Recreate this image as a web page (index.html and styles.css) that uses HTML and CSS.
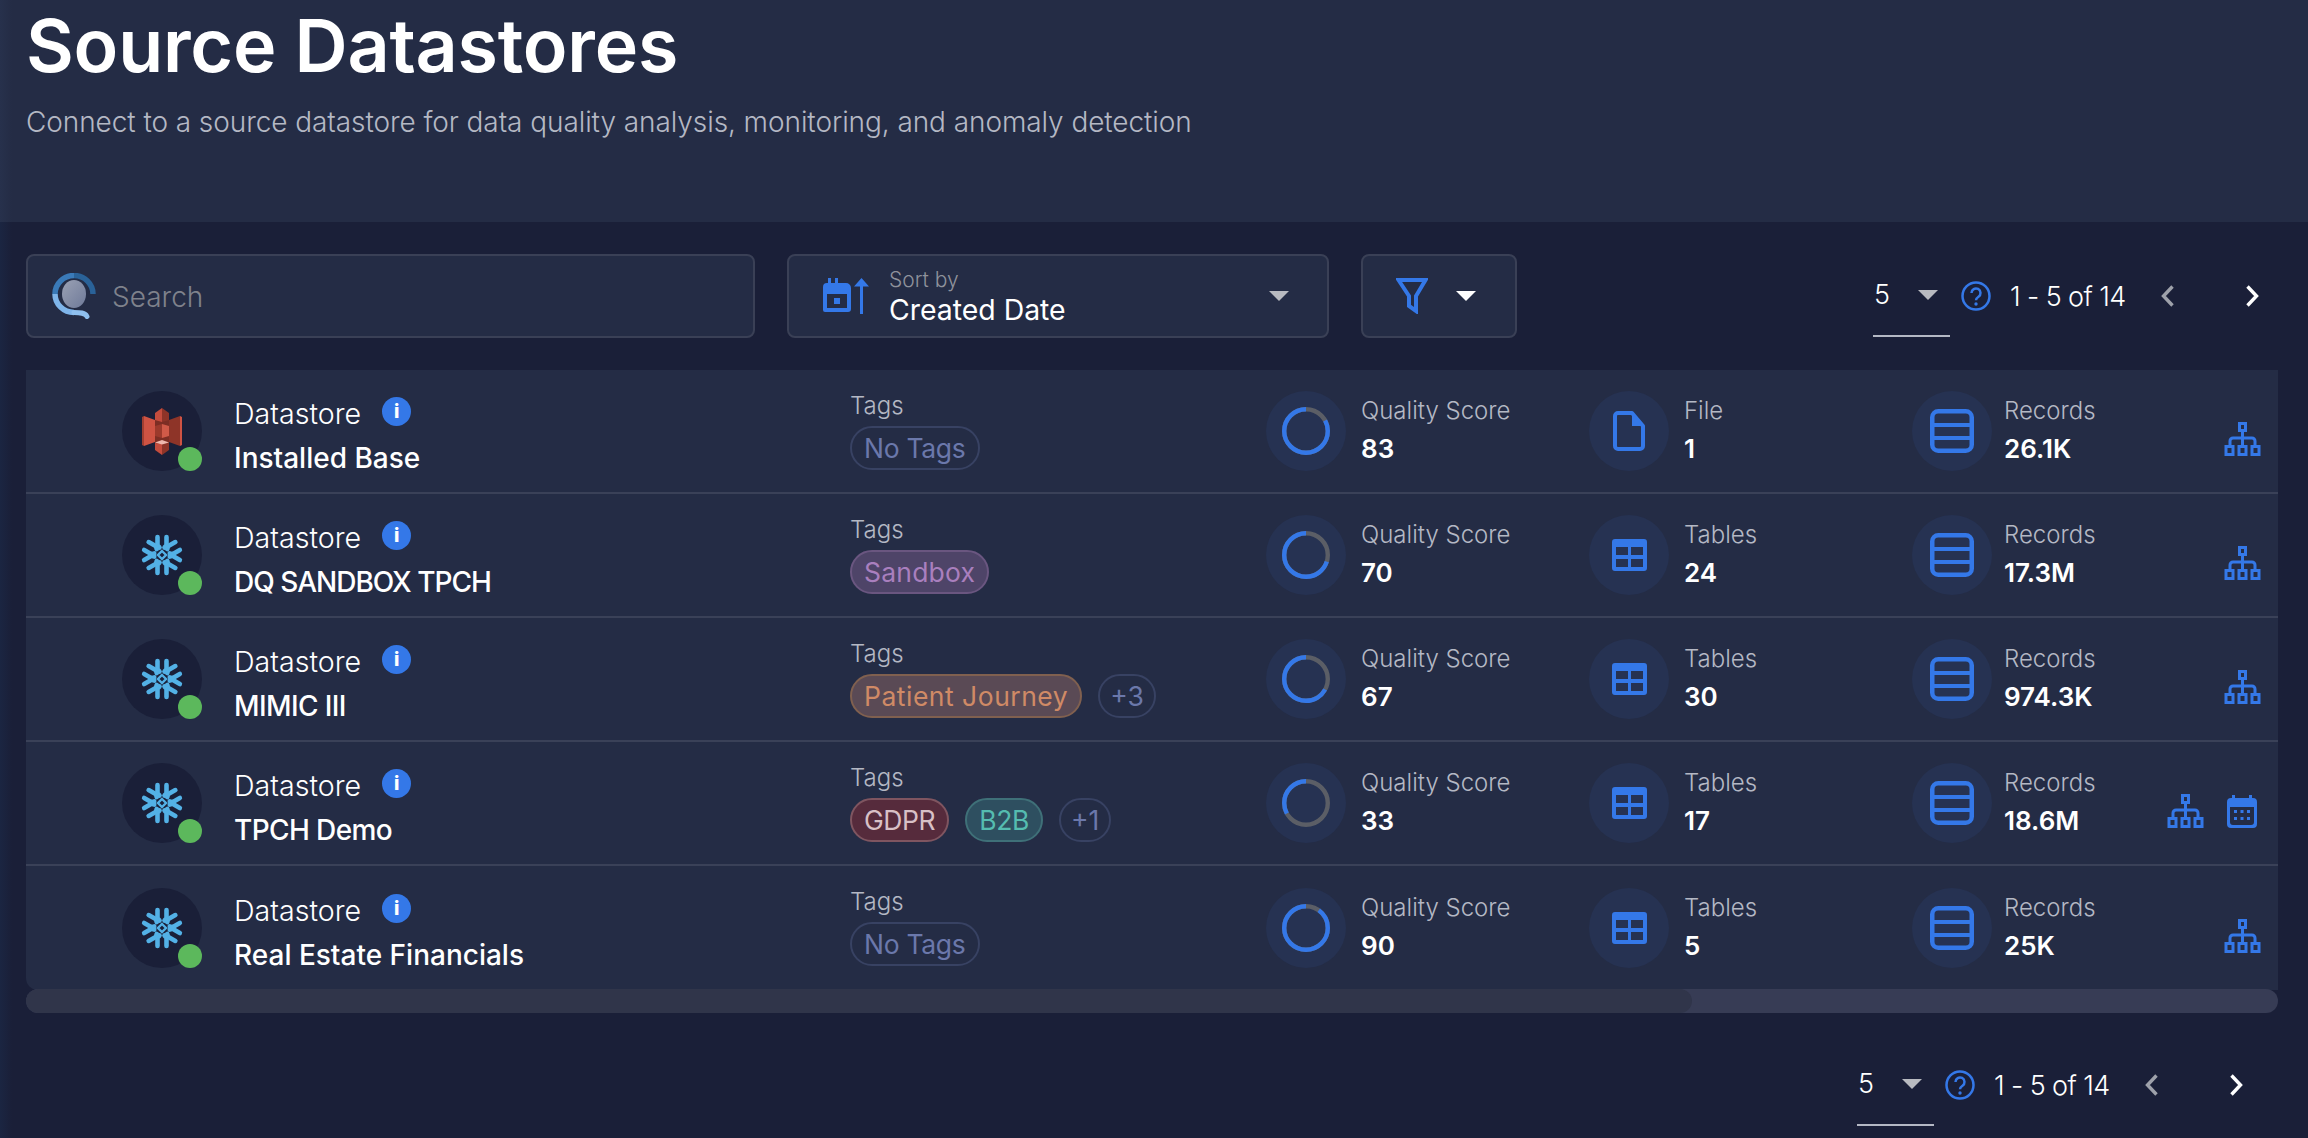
FILE: index.html
```html
<!DOCTYPE html>
<html lang="en">
<head>
<meta charset="utf-8">
<title>Source Datastores</title>
<link rel="stylesheet" href="styles.css">
</head>
<body>
<svg class="sprite" xmlns="http://www.w3.org/2000/svg">
  <symbol id="i-tree" viewBox="0 0 37 34">
    <path fill="none" stroke="currentColor" stroke-width="3" d="M15.5 1.5h6v7h-6zM18.5 9v14M6 23v-4a3 3 0 0 1 3-3h19a3 3 0 0 1 3 3v4M2 24.500h7v8H2zM15 24.500h7v8h-7zM28 24.500h7v8h-7z"/>
  </symbol>
  <symbol id="i-cal" viewBox="0 0 30 33">
    <path fill="currentColor" fill-rule="evenodd" d="M5 0h3v3h14V0h3v3h1a4 4 0 0 1 4 4v22a4 4 0 0 1-4 4H4a4 4 0 0 1-4-4V7a4 4 0 0 1 4-4h1zM3 12v15a3 3 0 0 0 3 3h18a3 3 0 0 0 3-3V12z"/>
    <path fill="currentColor" d="M7 15h3v3H7zM13.500 15h3v3h-3zM20 15h3v3h-3zM7 22h3v3H7zM13.500 22h3v3h-3zM20 22h3v3h-3z"/>
  </symbol>
  <symbol id="i-file" viewBox="0 0 32 40">
    <path fill="none" stroke="currentColor" stroke-width="4" stroke-linejoin="round" d="M2 5a3 3 0 0 1 3-3h14l11 13v20a3 3 0 0 1-3 3H5a3 3 0 0 1-3-3z"/>
    <path fill="currentColor" d="M19 2l11 13H19z"/>
  </symbol>
  <symbol id="i-table" viewBox="0 0 35 32">
    <path fill="currentColor" fill-rule="evenodd" d="M3 0h29a3 3 0 0 1 3 3v26a3 3 0 0 1-3 3H3a3 3 0 0 1-3-3V3a3 3 0 0 1 3-3zM4 8v8h12V8zM19 8v8h12V8zM4 20v8h12v-8zM19 20v8h12v-8z"/>
  </symbol>
  <symbol id="i-rec" viewBox="0 0 44 44">
    <rect x="2.250" y="2.250" width="39.500" height="39.500" rx="6" fill="none" stroke="currentColor" stroke-width="4.500"/>
    <path stroke="currentColor" stroke-width="4" d="M2 16h40M2 29h40"/>
  </symbol>
  <symbol id="i-snow" viewBox="0 0 42 42">
    <g fill="none" stroke="#53b1e6" stroke-width="4.600" stroke-linecap="round" stroke-linejoin="round">
      <path d="M16.500 3v8.500l2 2M25.500 3v8.500l-2 2"/>
      <path transform="rotate(60 21 21)" d="M16.500 3v8.500l2 2M25.500 3v8.500l-2 2"/>
      <path transform="rotate(120 21 21)" d="M16.500 3v8.500l2 2M25.500 3v8.500l-2 2"/>
      <path transform="rotate(180 21 21)" d="M16.500 3v8.500l2 2M25.500 3v8.500l-2 2"/>
      <path transform="rotate(240 21 21)" d="M16.500 3v8.500l2 2M25.500 3v8.500l-2 2"/>
      <path transform="rotate(300 21 21)" d="M16.500 3v8.500l2 2M25.500 3v8.500l-2 2"/>
    </g>
    <path fill="none" stroke="#53b1e6" stroke-width="2.400" d="M21 17l4 4-4 4-4-4z"/>
  </symbol>
  <symbol id="i-s3" viewBox="0 0 40 47">
    <path fill="#7d2e24" d="M13 10h14v28H13z"/>
    <path fill="#a23f31" d="M0 9l2-1v30l-2-1z"/>
    <path fill="#cf5343" d="M2 8l11 4v22L2 38z"/>
    <path fill="#cf5343" d="M38 8l2 1v28l-2 1z"/>
    <path fill="#8e3428" d="M38 8l-11 4v22l11 4z"/>
    <path fill="#c44c3d" d="M13 5l7-5v14l-7-2z"/>
    <path fill="#8e3428" d="M27 5l-7-5v14l7-2z"/>
    <path fill="#9c3a2c" d="M13 18l7-2v14l-7-2z"/>
    <path fill="#d05a48" d="M27 18l-7-2v14l7-2z"/>
    <path fill="#c44c3d" d="M13 35l7 1v11l-7-5z"/>
    <path fill="#8e3428" d="M27 35l-7 1v11l7-5z"/>
    <path fill="#eeb8ae" d="M13 34.500l7-2.500 7 2.500-7 2z"/>
  </symbol>
  <symbol id="i-caret" viewBox="0 0 20 10"><path fill="currentColor" d="M0 0h20L10 10z"/></symbol>
  <symbol id="i-q" viewBox="0 0 30 30">
    <circle cx="15" cy="15" r="13.500" fill="none" stroke="currentColor" stroke-width="2.500"/>
    <path fill="none" stroke="currentColor" stroke-width="2.500" d="M10.500 12a4.500 4.500 0 1 1 7 3.700c-1.500 1-2.500 1.800-2.500 3.600"/>
    <circle cx="15" cy="23" r="1.700" fill="currentColor"/>
  </symbol>
  <symbol id="i-chev" viewBox="0 0 14 22"><path fill="none" stroke="currentColor" stroke-width="3.400" d="M2.500 1.500l9 9.500-9 9.500"/></symbol>
</svg>

<div class="page">
  <header class="hero">
    <h1 class="title">Source Datastores</h1>
    <p class="subtitle">Connect to a source datastore for data quality analysis, monitoring, and anomaly detection</p>
  </header>

  <main class="content">
    <div class="toolbar">
      <div class="field search">
        <svg class="search-icon" viewBox="0 0 44 46">
          <defs><linearGradient id="lens" x1="0" y1="0" x2="1" y2="1"><stop offset="0" stop-color="#9aa1b4"/><stop offset="1" stop-color="#6f7a99"/></linearGradient></defs>
          <ellipse cx="22" cy="21" rx="12" ry="14" fill="url(#lens)"/>
          <path fill="none" stroke="#2a6298" stroke-width="5.500" d="M22 2.500a19 18.500 0 0 1 19 18.500"/>
          <path fill="none" stroke="#3a7ab8" stroke-width="5.500" d="M3 21A19 18.500 0 0 1 22 2.500"/>
          <path fill="none" stroke="#7fb5ea" stroke-width="5.500" d="M22 39.500A19 18.500 0 0 1 3 21"/>
          <path fill="none" stroke="#8fc0ef" stroke-width="5" stroke-linecap="round" d="M22 39.500c6 0 11 0 13 4"/>
        </svg>
        <span class="placeholder">Search</span>
      </div>
      <div class="field sort">
        <svg class="sort-icon" viewBox="0 0 46 36">
          <path fill="#3478e8" fill-rule="evenodd" d="M5 0h3v5h4V0h3v5h5h3a5 5 0 0 1 5 5v21a3 3 0 0 1-3 3H2a2 2 0 0 1-2-2V9a4 4 0 0 1 4-4h1zM4 16v14h20V16z"/>
          <path fill="#3478e8" d="M11 20h6v6h-6zM37 8h3v28h-3zM38.500 0L46 8.500H31z"/>
        </svg>
        <span class="sort-text"><span class="sort-label">Sort by</span><span class="sort-value">Created Date</span></span>
        <svg class="caret caret-muted"><use href="#i-caret"/></svg>
      </div>
      <div class="field filter">
        <svg class="funnel" viewBox="0 0 32 36">
          <path fill="none" stroke="#3478e8" stroke-width="4" stroke-linejoin="miter" d="M2.500 2h27L20 18v15l-7-5V18z"/>
        </svg>
        <svg class="caret caret-white"><use href="#i-caret"/></svg>
      </div>
      <div class="pager">
        <div class="pager-size"><span>5</span><svg class="caret caret-muted"><use href="#i-caret"/></svg></div>
        <svg class="pager-help"><use href="#i-q"/></svg>
        <span class="pager-range">1 - 5 of 14</span>
        <svg class="chev chev-prev"><use href="#i-chev"/></svg>
        <svg class="chev chev-next"><use href="#i-chev"/></svg>
      </div>
    </div>

    <section class="panel">
      <article class="row">
        <div class="store">
          <div class="avatar"><svg class="logo-s3"><use href="#i-s3"/></svg><span class="dot"></span></div>
          <div class="store-text">
            <div class="store-type">Datastore <span class="info">i</span></div>
            <div class="store-name">Installed Base</div>
          </div>
        </div>
        <div class="tags"><div class="muted-label">Tags</div><div class="tag-list"><span class="tag tag-none">No Tags</span></div></div>
        <div class="metric"><span class="disc"><svg class="ring" viewBox="0 0 48 48"><circle class="ring-bg" cx="24" cy="24" r="21.800"/><circle class="ring-fg" cx="24" cy="24" r="21.800" pathLength="100" stroke-dasharray="83 100"/></svg></span><div><div class="muted-label">Quality Score</div><div class="value">83</div></div></div>
        <div class="metric"><span class="disc"><svg class="ic-file"><use href="#i-file"/></svg></span><div><div class="muted-label">File</div><div class="value">1</div></div></div>
        <div class="metric metric-records"><span class="disc"><svg class="ic-rec"><use href="#i-rec"/></svg></span><div><div class="muted-label">Records</div><div class="value">26.1K</div></div></div>
        <div class="actions"><svg class="ic-tree"><use href="#i-tree"/></svg></div>
      </article>

      <article class="row">
        <div class="store">
          <div class="avatar"><svg class="logo-snow"><use href="#i-snow"/></svg><span class="dot"></span></div>
          <div class="store-text">
            <div class="store-type">Datastore <span class="info">i</span></div>
            <div class="store-name name-upper">DQ SANDBOX TPCH</div>
          </div>
        </div>
        <div class="tags"><div class="muted-label">Tags</div><div class="tag-list"><span class="tag tag-purple">Sandbox</span></div></div>
        <div class="metric"><span class="disc"><svg class="ring" viewBox="0 0 48 48"><circle class="ring-bg" cx="24" cy="24" r="21.800"/><circle class="ring-fg" cx="24" cy="24" r="21.800" pathLength="100" stroke-dasharray="70 100"/></svg></span><div><div class="muted-label">Quality Score</div><div class="value">70</div></div></div>
        <div class="metric"><span class="disc"><svg class="ic-table"><use href="#i-table"/></svg></span><div><div class="muted-label">Tables</div><div class="value">24</div></div></div>
        <div class="metric metric-records"><span class="disc"><svg class="ic-rec"><use href="#i-rec"/></svg></span><div><div class="muted-label">Records</div><div class="value">17.3M</div></div></div>
        <div class="actions"><svg class="ic-tree"><use href="#i-tree"/></svg></div>
      </article>

      <article class="row">
        <div class="store">
          <div class="avatar"><svg class="logo-snow"><use href="#i-snow"/></svg><span class="dot"></span></div>
          <div class="store-text">
            <div class="store-type">Datastore <span class="info">i</span></div>
            <div class="store-name name-tight">MIMIC III</div>
          </div>
        </div>
        <div class="tags"><div class="muted-label">Tags</div><div class="tag-list"><span class="tag tag-orange">Patient Journey</span><span class="tag tag-more">+3</span></div></div>
        <div class="metric"><span class="disc"><svg class="ring" viewBox="0 0 48 48"><circle class="ring-bg" cx="24" cy="24" r="21.800"/><circle class="ring-fg" cx="24" cy="24" r="21.800" pathLength="100" stroke-dasharray="67 100"/></svg></span><div><div class="muted-label">Quality Score</div><div class="value">67</div></div></div>
        <div class="metric"><span class="disc"><svg class="ic-table"><use href="#i-table"/></svg></span><div><div class="muted-label">Tables</div><div class="value">30</div></div></div>
        <div class="metric metric-records"><span class="disc"><svg class="ic-rec"><use href="#i-rec"/></svg></span><div><div class="muted-label">Records</div><div class="value">974.3K</div></div></div>
        <div class="actions"><svg class="ic-tree"><use href="#i-tree"/></svg></div>
      </article>

      <article class="row">
        <div class="store">
          <div class="avatar"><svg class="logo-snow"><use href="#i-snow"/></svg><span class="dot"></span></div>
          <div class="store-text">
            <div class="store-type">Datastore <span class="info">i</span></div>
            <div class="store-name name-tight">TPCH Demo</div>
          </div>
        </div>
        <div class="tags"><div class="muted-label">Tags</div><div class="tag-list"><span class="tag tag-red">GDPR</span><span class="tag tag-teal">B2B</span><span class="tag tag-more">+1</span></div></div>
        <div class="metric"><span class="disc"><svg class="ring" viewBox="0 0 48 48"><circle class="ring-bg" cx="24" cy="24" r="21.800"/><circle class="ring-fg" cx="24" cy="24" r="21.800" pathLength="100" stroke-dasharray="33 100"/></svg></span><div><div class="muted-label">Quality Score</div><div class="value">33</div></div></div>
        <div class="metric"><span class="disc"><svg class="ic-table"><use href="#i-table"/></svg></span><div><div class="muted-label">Tables</div><div class="value">17</div></div></div>
        <div class="metric metric-records"><span class="disc"><svg class="ic-rec"><use href="#i-rec"/></svg></span><div><div class="muted-label">Records</div><div class="value">18.6M</div></div></div>
        <div class="actions"><svg class="ic-tree"><use href="#i-tree"/></svg><svg class="ic-cal"><use href="#i-cal"/></svg></div>
      </article>

      <article class="row">
        <div class="store">
          <div class="avatar"><svg class="logo-snow"><use href="#i-snow"/></svg><span class="dot"></span></div>
          <div class="store-text">
            <div class="store-type">Datastore <span class="info">i</span></div>
            <div class="store-name">Real Estate Financials</div>
          </div>
        </div>
        <div class="tags"><div class="muted-label">Tags</div><div class="tag-list"><span class="tag tag-none">No Tags</span></div></div>
        <div class="metric"><span class="disc"><svg class="ring" viewBox="0 0 48 48"><circle class="ring-bg" cx="24" cy="24" r="21.800"/><circle class="ring-fg" cx="24" cy="24" r="21.800" pathLength="100" stroke-dasharray="90 100"/></svg></span><div><div class="muted-label">Quality Score</div><div class="value">90</div></div></div>
        <div class="metric"><span class="disc"><svg class="ic-table"><use href="#i-table"/></svg></span><div><div class="muted-label">Tables</div><div class="value">5</div></div></div>
        <div class="metric metric-records"><span class="disc"><svg class="ic-rec"><use href="#i-rec"/></svg></span><div><div class="muted-label">Records</div><div class="value">25K</div></div></div>
        <div class="actions"><svg class="ic-tree"><use href="#i-tree"/></svg></div>
      </article>
    </section>

    <div class="scrollbar"><div class="scroll-thumb"></div></div>

    <div class="pager pager-bottom">
      <div class="pager-size"><span>5</span><svg class="caret caret-muted"><use href="#i-caret"/></svg></div>
      <svg class="pager-help"><use href="#i-q"/></svg>
      <span class="pager-range">1 - 5 of 14</span>
      <svg class="chev chev-prev"><use href="#i-chev"/></svg>
      <svg class="chev chev-next"><use href="#i-chev"/></svg>
    </div>
  </main>
</div>
</body>
</html>
```

FILE: styles.css
```css
* { box-sizing: border-box; }
html, body { margin: 0; padding: 0; height: 100%; }
body {
  background: #1a1f38;
  color: #fff;
  font-family: Inter, "Liberation Sans", sans-serif;
  overflow: hidden;
}
.sprite { position: absolute; width: 0; height: 0; }
.page { height: 1138px; background: linear-gradient(90deg, rgba(30,60,100,.22) 0, rgba(30,60,100,0) 12px); }

.hero { height: 222px; padding: 0 26px; background: linear-gradient(90deg, #27314c 0, #242c45 12px); }
.title { margin: 0; padding-top: 5px; font-size: 73.500px; line-height: 82px; font-weight: 600; letter-spacing: -.2px; }
.subtitle { margin: 0; padding-top: 17px; font-size: 28px; line-height: 36px; font-weight: 300; letter-spacing: -.08px; color: #b4b8c4; }

.content { padding: 32px 30px 0 26px; }

.toolbar { display: flex; align-items: flex-start; height: 84px; }
.field {
  height: 84px;
  display: flex;
  align-items: center;
  background: #242c45;
  border: 2px solid #3a4056;
  border-radius: 8px;
}
.search { width: 729px; padding-left: 24px; }
.search-icon { width: 44px; height: 46px; flex: none; }
.placeholder { margin-left: 16px; padding-top: 2px; font-size: 28px; font-weight: 300; color: #7f828c; }
.sort { width: 542px; margin-left: 32px; padding-left: 34px; }
.sort-icon { width: 46px; height: 36px; flex: none; }
.sort-text { display: flex; flex-direction: column; margin-left: 20px; padding-top: 1px; flex: 1; }
.sort-label { font-size: 21px; line-height: 26px; font-weight: 300; color: #8f929c; }
.sort-value { font-size: 28.400px; line-height: 34px; font-weight: 400; }
.caret { width: 20px; height: 10px; flex: none; }
.caret-muted { color: #b8bac0; }
.caret-white { color: #fff; }
.sort .caret { margin-right: 38px; }
.filter { width: 156px; margin-left: 32px; padding-left: 33px; }
.funnel { width: 32px; height: 36px; flex: none; }
.filter .caret { margin-left: 28px; }

.pager { display: flex; align-items: center; margin-left: auto; height: 84px; position: relative; }
.pager-size {
  width: 77px;
  height: 83px;
  margin-left: 1px;
  align-self: flex-start;
  display: flex;
  align-items: center;
  font-size: 27px;
  font-weight: 300;
  border-bottom: 2px solid #b4b8c4;
  justify-content: space-between;
  padding: 0 12px 0 1px;
  flex: none;
}
.pager-help { width: 30px; height: 30px; margin-left: 11px; color: #3478e8; flex: none; }
.pager-range { margin-left: 19px; width: 116px; white-space: nowrap; font-size: 27px; font-weight: 300; letter-spacing: -.6px; }
.chev { width: 14px; height: 22px; flex: none; }
.chev-prev { margin-left: 35px; color: #9ea1aa; transform: scaleX(-1); }
.chev-next { margin-left: 70px; color: #fff; margin-right: 19px; }

.panel { margin-top: 32px; background: #242c45; border-radius: 0 0 0 12px; }
.row {
  height: 124px;
  display: grid;
  grid-template-columns: 728px 416px 323px 323px 323px 1fr;
  padding-left: 96px;
  align-items: center;
  border-bottom: 2px solid #3a4158;
}
.row:last-child { border-bottom: 0; }

.store { display: flex; align-items: center; }
.avatar { position: relative; width: 80px; height: 80px; border-radius: 50%; background: #1a1f38; display: flex; align-items: center; justify-content: center; flex: none; }
.logo-s3 { width: 40px; height: 47px; }
.logo-snow { width: 42px; height: 42px; }
.dot { position: absolute; right: 0; bottom: 0; width: 24px; height: 24px; border-radius: 50%; background: #5cb85c; }
.store-text { margin-left: 32px; padding-top: 6px; }
.store-type { display: flex; align-items: center; font-size: 28.600px; line-height: 40px; font-weight: 300; }
.info { width: 29px; height: 29px; margin-left: 21px; margin-top: -4px; border-radius: 50%; background: #3478e8; display: flex; align-items: center; justify-content: center; font-size: 19px; font-weight: 800; }
.store-name { margin-top: 7px; font-size: 28px; line-height: 34px; font-weight: 500; }
.name-upper { letter-spacing: -1px; }
.name-tight { letter-spacing: -.6px; }

.tags { align-self: start; padding-top: 18px; }
.muted-label { font-size: 24px; line-height: 36px; font-weight: 300; color: #b4b8c4; }
.tag-list { display: flex; gap: 16px; margin-top: 2px; }
.tag {
  height: 44px;
  padding: 0 12px;
  display: inline-flex;
  align-items: center;
  border-radius: 22px;
  font-size: 26.500px;
  border: 2px solid;
  font-weight: 400;
  white-space: nowrap;
}
.tag-none { color: #6b78ab; border-color: #384263; letter-spacing: -.3px; }
.tag-more { color: #6b78ab; border-color: #384263; padding: 0 10px; }
.tag-purple { color: #a97fbe; background: #4e4468; border-color: #6a5680; letter-spacing: .2px; }
.tag-orange { color: #d08a66; background: #5a4a55; border-color: #80604f; letter-spacing: .5px; }
.tag-red { color: #d8c0c6; background: #562b3c; border-color: #7f5560; letter-spacing: -.4px; }
.tag-teal { color: #55bcb0; background: #2e4f60; border-color: #3f7078; letter-spacing: -.4px; }

.metric { display: flex; align-items: center; }
.disc { width: 80px; height: 80px; border-radius: 50%; background: #263252; display: flex; align-items: center; justify-content: center; flex: none; color: #3478e8; }
.metric > div { margin-left: 15px; padding-bottom: 3px; }
.metric-records > div { margin-left: 12px; }
.ring { width: 48px; height: 48px; transform: rotate(-90deg) scaleY(-1); }
.ring-bg { fill: none; stroke: #5b5e66; stroke-width: 4.400; }
.ring-fg { fill: none; stroke: #3478e8; stroke-width: 4.400; }
.ic-file { width: 32px; height: 40px; }
.ic-table { width: 35px; height: 32px; }
.ic-rec { width: 44px; height: 44px; }
.value { margin-top: 3px; font-size: 26px; line-height: 34px; font-weight: 600; }

.actions { display: flex; justify-content: flex-end; align-items: center; padding-right: 17px; padding-top: 16px; color: #3478e8; gap: 23px; }
.ic-tree { width: 37px; height: 34px; flex: none; }
.ic-cal { width: 30px; height: 33px; flex: none; margin-right: 4px; }
.row > .actions { margin-left: -323px; }

.scrollbar { margin-top: -1px; height: 24px; border-radius: 12px; background: #373c55; overflow: hidden; }
.scroll-thumb { width: 1666px; height: 24px; background: #30354a; border-radius: 12px; }

.pager-bottom { justify-content: flex-end; margin-top: 30px; margin-right: 0; height: 84px; padding-right: 16px; }
```
